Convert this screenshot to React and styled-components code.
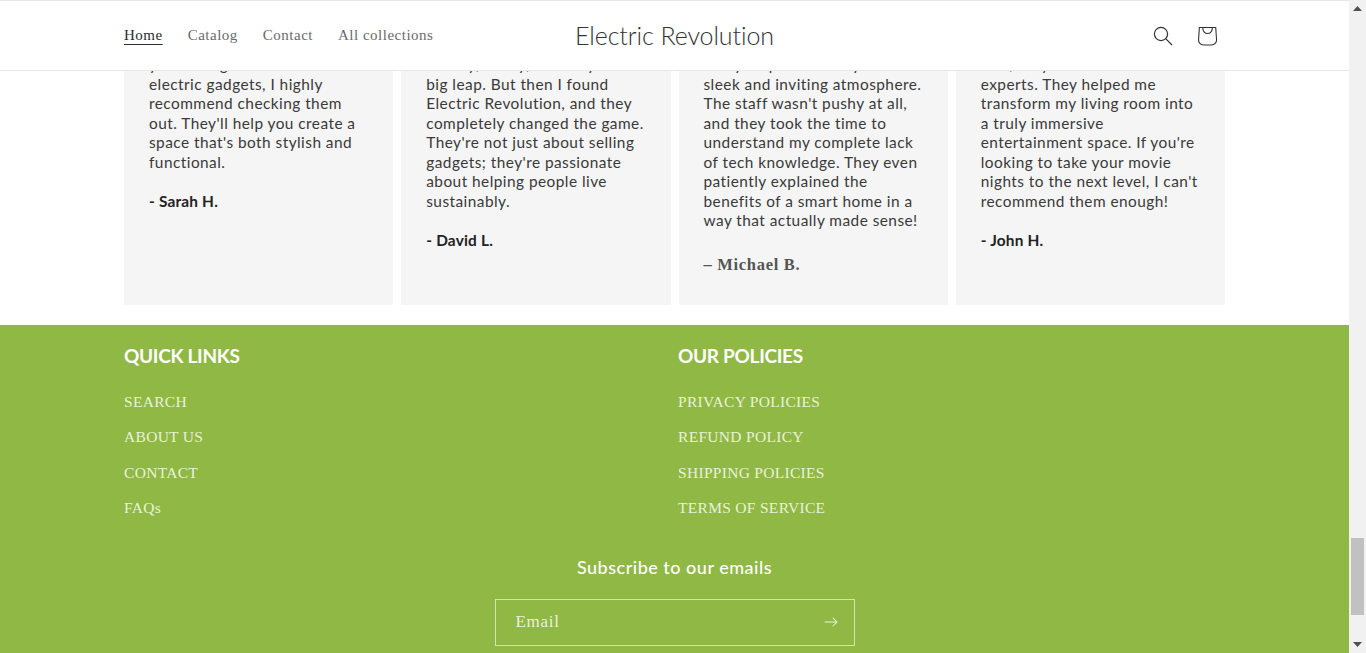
import React from "react";
import styled, { createGlobalStyle } from "styled-components";

const Global = createGlobalStyle`
  html, body { margin: 0; padding: 0; height: 653px; overflow: hidden; background: #fff; }
  #root { height: 653px; }
`;
const Futura = `"Lato", "Noto Sans", sans-serif`;
const Serif = `"Liberation Serif", serif`;

const Viewport = styled.div`display: flex; height: 653px; overflow: hidden;`;
const Page = styled.div`width: 1349px; height: 653px; display: flex; flex-direction: column; overflow: hidden;`;

const Header = styled.header`
  flex: 0 0 71px; box-sizing: border-box;
  border-top: 1px solid #e6e6ee; border-bottom: 1px solid #e8e8e8;
  background: #fff; display: grid; grid-template-columns: minmax(0, 1fr) auto minmax(0, 1fr);
  align-items: center; padding: 0 124px;
`;
const Nav = styled.nav`display: flex; gap: 25px; align-items: center; padding-bottom: 2px;`;
const NavLink = styled.a`
  font: 15px/20px ${Serif}; letter-spacing: 0.5px; white-space: nowrap;
  color: ${p => (p.$active ? "#2b2b2b" : "#6a6a6a")};
  text-decoration: ${p => (p.$active ? "underline" : "none")};
  text-underline-offset: 4px;
`;
const Brand = styled.div`font: 300 25px/32px ${Futura}; letter-spacing: -0.1px; color: #333; white-space: nowrap; padding-bottom: 2px;`;
const Actions = styled.div`display: flex; justify-content: flex-end; margin-right: -4px;`;
const IconBtn = styled.button`
  width: 44px; height: 44px; border: 0; padding: 0; background: none;
  display: flex; align-items: center; justify-content: center; color: #333;
`;

const Reviews = styled.section`
  flex: 0 0 254px; overflow: hidden; display: flex; flex-direction: column;
  justify-content: flex-end; padding: 0 124px 20px; box-sizing: border-box;
`;
const Grid = styled.div`display: grid; grid-template-columns: repeat(4, minmax(0, 1fr)); gap: 8px; width: 1101px;`;
const Card = styled.article`background: #f5f5f5; padding: 0 10px 29px 25px; box-sizing: border-box;`;
const Line = styled.div`font: 400 15.4px/19.55px ${Futura}; letter-spacing: 0.46px; color: #3a3a3a; white-space: nowrap;`;
const Author = styled.div`
  margin-top: ${p => (p.$serif ? "23px" : "19.5px")};
  font: ${p => (p.$serif ? `700 16.5px/22px ${Serif}` : `700 15.4px/19.55px ${Futura}`)};
  letter-spacing: ${p => (p.$serif ? "0.7px" : "0.2px")};
  color: ${p => (p.$serif ? "#555" : "#222")};
`;

const Footer = styled.footer`flex: 1; background: #90b845; padding: 18px 124px 0; display: flex; flex-direction: column;`;
const Columns = styled.div`display: grid; grid-template-columns: 554px 1fr;`;
const Heading = styled.h2`margin: 0 0 23px; font: 700 19px/26px ${Futura}; letter-spacing: -0.3px; color: #fff;`;
const Links = styled.ul`list-style: none; margin: 0; padding: 0; display: flex; flex-direction: column; gap: 15.3px;`;
const FootLink = styled.li`font: 15.5px/20px ${Serif}; letter-spacing: 0.3px; color: #e9f2d9;`;
const Subscribe = styled.div`display: flex; flex-direction: column; align-items: center; margin-top: 36px;`;
const SubTitle = styled.h3`margin: 0 0 19px; font: 500 18px/26px ${Futura}; letter-spacing: 0.5px; color: #fff;`;
const Field = styled.div`
  width: 360px; height: 47px; box-sizing: border-box; border: 1px solid #d3e3b4;
  display: flex; align-items: center; justify-content: space-between; padding: 0 16px 0 20px;
`;
const Placeholder = styled.span`font: 17px/20px ${Serif}; letter-spacing: 0.7px; color: #e9f2d9;`;

const Scrollbar = styled.aside`width: 17px; height: 653px; background: #f1f1f1; display: flex; flex-direction: column; align-items: center;`;
const Arrow = styled.div`flex: 0 0 17px; display: flex; align-items: center; justify-content: center;`;
const Track = styled.div`flex: 1; width: 100%; display: flex; flex-direction: column; align-items: center;`;
const Thumb = styled.div`margin-top: 521px; width: 13px; height: 77px; background: #c1c1c1;`;

const cards = [
  { lines: ["Their knowledge is top-notch, and", "they're easy to talk with. If you", "your new guide to smart", "electric gadgets, I highly", "recommend checking them", "out. They'll help you create a", "space that's both stylish and", "functional."], by: "- Sarah H." },
  { lines: ["I've always wanted to go green,", "but going electric felt like", "a scary, costly, and very", "big leap. But then I found", "Electric Revolution, and they", "completely changed the game.", "They're not just about selling", "gadgets; they're passionate", "about helping people live", "sustainably."], by: "- David L." },
  { lines: ["Walking into a tech shop is", "usually scary, but this one", "really surprised me by its", "sleek and inviting atmosphere.", "The staff wasn't pushy at all,", "and they took the time to", "understand my complete lack", "of tech knowledge. They even", "patiently explained the", "benefits of a smart home in a", "way that actually made sense!"], by: "– Michael B.", serif: true },
  { lines: ["I wanted a great home theater,", "and this team is truly great", "at it, they are real", "experts. They helped me", "transform my living room into", "a truly immersive", "entertainment space. If you're", "looking to take your movie", "nights to the next level, I can't", "recommend them enough!"], by: "- John H." },
];
const quick = ["SEARCH", "ABOUT US", "CONTACT", "FAQs"];
const policies = ["PRIVACY POLICIES", "REFUND POLICY", "SHIPPING POLICIES", "TERMS OF SERVICE"];

const SearchIcon = () => (
  <svg width="20" height="20" viewBox="0 0 20 20" fill="none" stroke="currentColor" strokeWidth="1.2">
    <circle cx="8" cy="8" r="6.6" />
    <path d="M12.9 12.9 L19 19" />
  </svg>
);
const CartIcon = () => (
  <svg width="44" height="44" viewBox="0 0 40 40" fill="currentColor">
    <path fillRule="evenodd" d="m15.75 11.8h-3.16l-.77 11.6a5 5 0 0 0 4.99 5.34h7.38a5 5 0 0 0 4.99-5.33L28.4 11.8zm0 1h-2.22l-.71 10.67a4 4 0 0 0 3.99 4.27h7.38a4 4 0 0 0 4-4.27l-.72-10.67h-2.22v.63a4.75 4.75 0 1 1-9.5 0zm8.5 0h-7.5v.63a3.75 3.75 0 1 0 7.5 0z" />
  </svg>
);
const ArrowIcon = () => (
  <svg width="14" height="10" viewBox="0 0 14 10" fill="#e9f2d9">
    <path fillRule="evenodd" d="M8.537.808a.5.5 0 01.817-.162l4 4a.5.5 0 010 .708l-4 4a.5.5 0 11-.708-.708L11.793 5.5H1a.5.5 0 010-1h10.793L8.646 1.354a.5.5 0 01-.109-.546z" />
  </svg>
);
const Tri = ({ down }) => (
  <svg width="9" height="5" viewBox="0 0 9 5" fill="#505050">
    <path d={down ? "M0 0H9L4.5 5Z" : "M0 5H9L4.5 0Z"} />
  </svg>
);

export default function App() {
  return (
    <>
      <Global />
      <Viewport>
        <Page>
          <Header>
            <Nav>
              <NavLink $active>Home</NavLink>
              <NavLink>Catalog</NavLink>
              <NavLink>Contact</NavLink>
              <NavLink>All collections</NavLink>
            </Nav>
            <Brand>Electric Revolution</Brand>
            <Actions>
              <IconBtn aria-label="Search"><SearchIcon /></IconBtn>
              <IconBtn aria-label="Cart"><CartIcon /></IconBtn>
            </Actions>
          </Header>
          <Reviews>
            <Grid>
              {cards.map(c => (
                <Card key={c.by}>
                  {c.lines.map(l => <Line key={l}>{l}</Line>)}
                  <Author $serif={c.serif}>{c.by}</Author>
                </Card>
              ))}
            </Grid>
          </Reviews>
          <Footer>
            <Columns>
              <div>
                <Heading>QUICK LINKS</Heading>
                <Links>{quick.map(t => <FootLink key={t}>{t}</FootLink>)}</Links>
              </div>
              <div>
                <Heading>OUR POLICIES</Heading>
                <Links>{policies.map(t => <FootLink key={t}>{t}</FootLink>)}</Links>
              </div>
            </Columns>
            <Subscribe>
              <SubTitle>Subscribe to our emails</SubTitle>
              <Field>
                <Placeholder>Email</Placeholder>
                <ArrowIcon />
              </Field>
            </Subscribe>
          </Footer>
        </Page>
        <Scrollbar>
          <Arrow><Tri /></Arrow>
          <Track><Thumb /></Track>
          <Arrow><Tri down /></Arrow>
        </Scrollbar>
      </Viewport>
    </>
  );
}
